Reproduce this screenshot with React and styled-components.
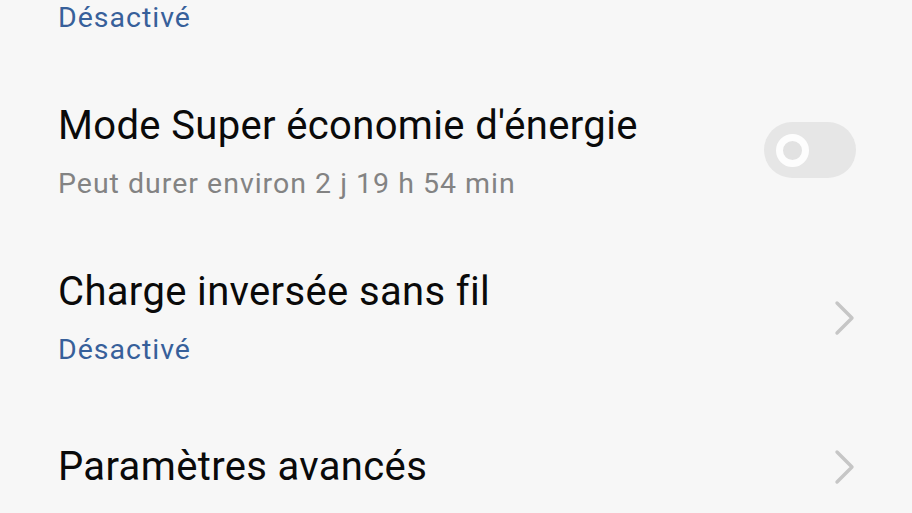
import React from "react";
import styled, { createGlobalStyle } from "styled-components";

const Global = createGlobalStyle`
  html, body { margin: 0; padding: 0; background: #f7f7f7; }
  body { font-family: Roboto, "Noto Sans", "Liberation Sans", sans-serif; overflow: hidden; }
`;

const Screen = styled.div`
  width: 912px;
  height: 513px;
  overflow: hidden;
  background: #f7f7f7;
`;

const List = styled.div`
  display: flex;
  flex-direction: column;
`;

const Row = styled.div`
  display: flex;
  align-items: center;
  justify-content: space-between;
  padding: ${(p) => (p.$single ? "43px 56px 43px 58px" : p.$partial ? "0 56px 32px 58px" : "34px 56px 32px 58px")};
`;

const Texts = styled.div`
  display: flex;
  flex-direction: column;
  gap: 16px;
`;

const Title = styled.div`
  font-size: 40px;
  line-height: 48px;
  color: #0a0a0a;
  letter-spacing: 0.35px;
`;

const Sub = styled.div`
  font-size: 28.5px;
  line-height: 36px;
  letter-spacing: 1px;
  color: ${(p) => (p.$accent ? "#37609a" : "#838383")};
`;

const Track = styled.div`
  width: 92px;
  height: 56px;
  border-radius: 28px;
  background: #e6e6e6;
  display: flex;
  align-items: center;
  padding-left: 12px;
  box-sizing: border-box;
  margin-top: -4px;
`;

const Knob = styled.div`
  width: 33px;
  height: 33px;
  border-radius: 50%;
  box-sizing: border-box;
  border: 7px solid #fdfdfd;
  background: #e2e2e2;
`;

const Chevron = () => (
  <svg width="22" height="36" viewBox="0 0 22 36" fill="none">
    <path d="M3 3 L18 18 L3 33" stroke="#c6c6c6" strokeWidth="3.4" strokeLinecap="round" strokeLinejoin="round" />
  </svg>
);

export default function App() {
  return (
    <Screen>
      <Global />
      <List>
        <Row $partial>
          <Texts>
            <Sub $accent>Désactivé</Sub>
          </Texts>
        </Row>
        <Row>
          <Texts>
            <Title>Mode Super économie d'énergie</Title>
            <Sub>Peut durer environ 2 j 19 h 54 min</Sub>
          </Texts>
          <Track>
            <Knob />
          </Track>
        </Row>
        <Row>
          <Texts>
            <Title>Charge inversée sans fil</Title>
            <Sub $accent>Désactivé</Sub>
          </Texts>
          <Chevron />
        </Row>
        <Row $single>
          <Texts>
            <Title>Paramètres avancés</Title>
          </Texts>
          <Chevron />
        </Row>
      </List>
    </Screen>
  );
}
